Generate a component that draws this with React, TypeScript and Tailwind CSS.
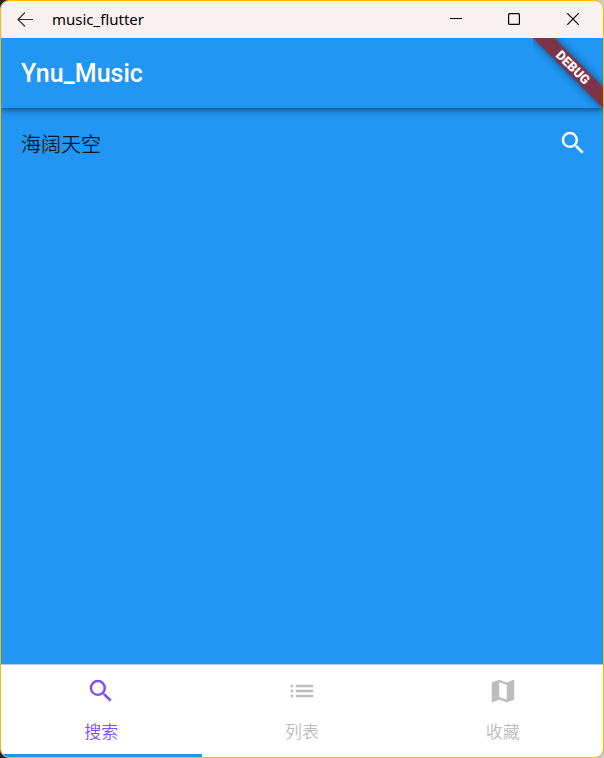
import { useState } from "react";
import { MdList, MdMap, MdSearch } from "react-icons/md";

const tabs = [
  { id: "search", label: "搜索", Icon: MdSearch },
  { id: "list", label: "列表", Icon: MdList },
  { id: "favorites", label: "收藏", Icon: MdMap },
];

function TitleBar() {
  return (
    <div className="relative z-20 flex h-[37px] shrink-0 items-center bg-[#f9f0f0] pb-0.5 text-black">
      <button type="button" aria-label="Back" className="ml-[14px] flex size-5 items-center justify-center">
        <svg width="20" height="20" viewBox="0 0 20 20" fill="none" stroke="#333" strokeWidth="1.2">
          <path d="M18 10.5H3M10 3.5L3 10.5L10 17.5" />
        </svg>
      </button>
      <span className="ml-[17px] flex-1 font-['Noto_Sans','Open_Sans',sans-serif] text-[15px] leading-5">
        music_flutter
      </span>
      <button type="button" aria-label="Minimize" className="flex h-full w-[58px] items-center justify-center">
        <svg width="12" height="12" viewBox="0 0 12 12" stroke="currentColor">
          <path d="M0 5.5H12" />
        </svg>
      </button>
      <button type="button" aria-label="Maximize" className="flex h-full w-[58px] items-center justify-center">
        <svg width="12" height="12" viewBox="0 0 12 12" fill="none" stroke="currentColor" strokeWidth="1.2">
          <rect x="0.6" y="0.6" width="10.8" height="10.8" rx="1" />
        </svg>
      </button>
      <button type="button" aria-label="Close" className="flex h-full w-[60px] items-center justify-center">
        <svg width="12" height="12" viewBox="0 0 12 12" stroke="currentColor" strokeWidth="1.2">
          <path d="M0.3 0.3L11.7 11.7M11.7 0.3L0.3 11.7" />
        </svg>
      </button>
    </div>
  );
}

function DebugBanner() {
  return (
    <div className="pointer-events-none absolute top-0 right-0 size-[70px] overflow-hidden">
      <div className="absolute top-[22px] -right-5 flex h-[15px] w-[100px] rotate-45 items-center justify-center bg-[#7e3448] shadow-[0_0_8px_rgba(0,0,0,0.5)]">
        <span className="font-['Roboto',sans-serif] text-[13px] leading-[15px] font-black text-white">DEBUG</span>
      </div>
    </div>
  );
}

export default function App() {
  const [active, setActive] = useState("search");
  const [query, setQuery] = useState("海阔天空");

  return (
    <div className="flex min-h-screen bg-linear-to-r from-[#222] to-[#ccc]">
      <div className="flex flex-1 flex-col overflow-hidden rounded-[9px] border border-[#ffb900] bg-[#2196f3]">
        <TitleBar />
        <header className="relative z-10 flex h-[70px] shrink-0 items-center bg-[#2196f3] px-5 pt-0.5 shadow-[0_2px_6px_rgba(0,0,0,0.5)]">
          <h1 className="font-['Roboto',sans-serif] text-[25px] leading-8 font-medium text-white">Ynu_Music</h1>
          <DebugBanner />
        </header>
        <main className="flex-1">
          <form className="flex h-[70px] items-center pr-[15px] pl-5" onSubmit={(e) => e.preventDefault()}>
            <input
              type="text"
              aria-label="搜索歌曲"
              value={query}
              onChange={(e) => setQuery(e.target.value)}
              className="min-w-0 flex-1 bg-transparent pt-0.5 font-['Noto_Sans_CJK_SC',sans-serif] text-[20px] leading-7 font-[350] text-black/85 outline-none"
            />
            <button type="submit" aria-label="搜索" className="text-white">
              <MdSearch size={30} />
            </button>
          </form>
        </main>
        <nav className="flex h-[93px] shrink-0 border-t border-[#a6cdee] bg-white font-['Noto_Sans_CJK_SC',sans-serif]">
          {tabs.map(({ id, label, Icon }) => (
            <button
              key={id}
              type="button"
              onClick={() => setActive(id)}
              className={`flex flex-1 flex-col items-center border-b-[3px] pt-[11px] ${
                active === id ? "border-[#2196f3] text-[#7c4dff]" : "border-transparent text-[#bdbdbd]"
              }`}
            >
              <Icon size={30} />
              <span className="mt-[13px] text-[17px] leading-6 font-[350]">{label}</span>
            </button>
          ))}
        </nav>
      </div>
    </div>
  );
}
